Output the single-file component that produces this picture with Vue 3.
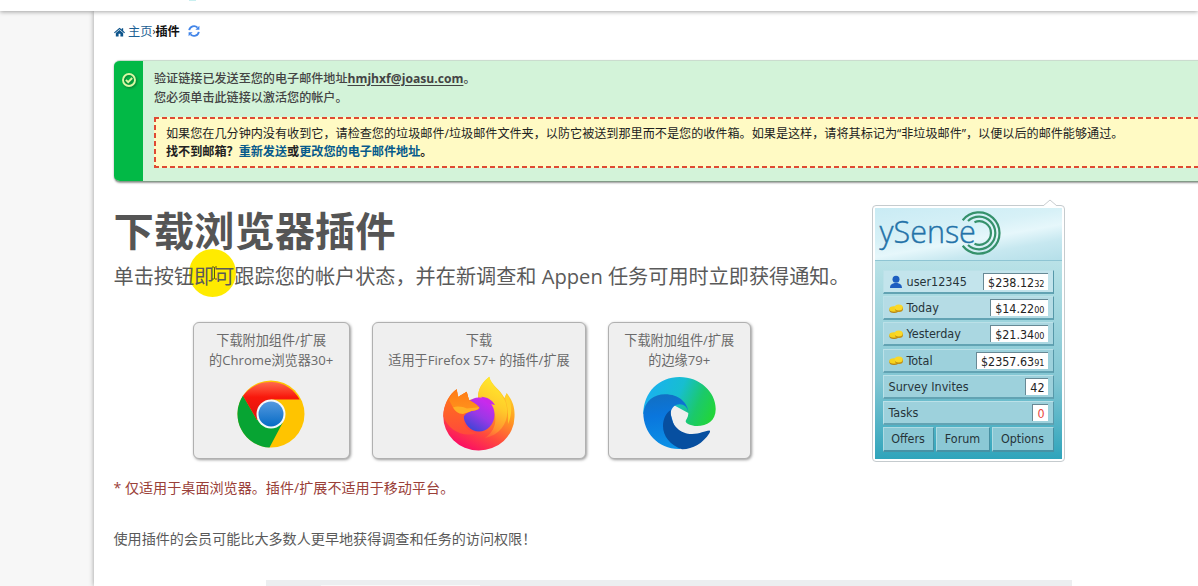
<script setup>
const balances = [
  { label: 'user12345', value: '$238.12', small: '32', icon: 'user' },
  { label: 'Today', value: '$14.22', small: '00', icon: 'coin' },
  { label: 'Yesterday', value: '$21.34', small: '00', icon: 'coin' },
  { label: 'Total', value: '$2357.63', small: '91', icon: 'coin' },
  { label: 'Survey Invites', value: '42' },
  { label: 'Tasks', value: '0', alert: true },
]
</script>

<template>
  <div class="page">
    <header class="topbar"><i class="speck"></i></header>
    <div class="body">
      <main class="content">
        <nav class="crumbs">
          <svg class="home" viewBox="0 0 12 10"><path d="M6 .4 0 5.500l.8.8L6 2l5.200 4.300.8-.8L10 3.700V1H8.500v1.400z" /><path d="M2 6v3.800h3V7h2v2.800h3V6L6 2.800z" /></svg>
          <a>主页</a><span class="sep">›</span><b>插件</b>
          <svg class="sync" viewBox="0 0 12 12"><path d="M1.200 5.200A4.900 4.900 0 0 1 9.500 2.600M10.800 6.800A4.900 4.900 0 0 1 2.500 9.400" fill="none" stroke="#4285e8" stroke-width="1.900" /><path d="M11.400.8v4h-4zM.6 11.200v-4h4z" fill="#4285e8" /></svg>
        </nav>

        <section class="alert">
          <div class="alert-side">
            <svg viewBox="0 0 16 16"><circle cx="8" cy="8" r="6" fill="none" stroke="#d9f8a4" stroke-width="1.900" /><path d="M4.900 7.900l2.300 2.300 4-4.200" fill="none" stroke="#d9f8a4" stroke-width="1.900" /></svg>
          </div>
          <div class="alert-main">
            <p>验证链接已发送至您的电子邮件地址<u>hmjhxf@joasu.com</u>。</p>
            <p>您必须单击此链接以激活您的帐户。</p>
            <div class="notice">
              <p>如果您在几分钟内没有收到它，请检查您的垃圾邮件/垃圾邮件文件夹，以防它被送到那里而不是您的收件箱。如果是这样，请将其标记为“非垃圾邮件”，以便以后的邮件能够通过。</p>
              <p class="strong">找不到邮箱？<a>重新发送</a>或<a>更改您的电子邮件地址</a>。</p>
            </div>
          </div>
        </section>

        <div class="columns">
          <div class="left">
            <h1>下载浏览器插件</h1>
            <p class="lead"><span class="pointer"></span><span class="lead-text">单击按钮即可跟踪您的帐户状态，并在新调查和 Appen 任务可用时立即获得通知。</span>
              <svg class="ibeam" viewBox="0 0 7 14"><path d="M1 1h2l.5.500L4 1h2M3.500 1.500v11M1 13h2l.5-.5.500.5h2" fill="none" stroke="#5a5310" stroke-width="1" /></svg>
            </p>
            <div class="buttons">
              <div class="card chrome">
                <span>下载附加组件/扩展</span><span>的Chrome浏览器30+</span>
                <svg viewBox="0 0 72 72">
                  <defs>
                    <linearGradient id="cr" x1="0" y1="0" x2="0" y2="1"><stop offset="0" stop-color="#ff6a4d" /><stop offset=".4" stop-color="#f8180c" /><stop offset="1" stop-color="#dc140e" /></linearGradient>
                    <linearGradient id="cb" x1="0" y1="0" x2="0" y2="1"><stop offset="0" stop-color="#5599df" /><stop offset="1" stop-color="#066bc5" /></linearGradient>
                  </defs>
                  <circle cx="36" cy="37" r="33.500" fill="#ffc400" />
                  <path d="M34.500 70.500 47.500 46 36 37 22 43 8 18.600A33.500 33.500 0 0 0 34.500 70.500" fill="#07a433" />
                  <path d="M8 19A33.500 33.500 0 0 1 64.700 22.500H36L22 43z" fill="url(#cr)" />
                  <circle cx="36" cy="37" r="14.500" fill="#f4f8fb" />
                  <circle cx="36" cy="37" r="12.500" fill="url(#cb)" />
                </svg>
              </div>
              <div class="card firefox">
                <span>下载</span><span>适用于Firefox 57+ 的插件/扩展</span>
                <svg viewBox="0 0 72 75">
                  <defs>
                    <linearGradient id="fo" x1=".75" y1=".1" x2=".3" y2="1"><stop offset="0" stop-color="#ffd52b" /><stop offset=".35" stop-color="#ff9a22" /><stop offset=".68" stop-color="#ff4a3d" /><stop offset="1" stop-color="#fa0868" /></linearGradient>
                    <linearGradient id="fy" x1=".6" y1="0" x2=".35" y2="1"><stop offset="0" stop-color="#ffed2c" /><stop offset=".45" stop-color="#ffcb2a" /><stop offset=".8" stop-color="#ff9330" /><stop offset="1" stop-color="#ff5a3c" /></linearGradient>
                    <linearGradient id="fp" x1=".8" y1=".1" x2=".3" y2="1"><stop offset="0" stop-color="#d028ee" /><stop offset=".5" stop-color="#9a38e6" /><stop offset="1" stop-color="#3b45d6" /></linearGradient>
                    <linearGradient id="fh" x1="0" y1="0" x2="0" y2="1"><stop offset="0" stop-color="#ff7a16" /><stop offset="1" stop-color="#ff951c" /></linearGradient>
                    <linearGradient id="fl" x1="0" y1="0" x2="0" y2="1"><stop offset="0" stop-color="#ff7a16" /><stop offset="1" stop-color="#ff4a3a" /></linearGradient>
                  </defs>
                  <path d="M35 22C35 11 41 5 46.300.7 48 9 57 13 61.500 22L63.700 17C70 25 72 32 71.500 41A35.600 34 0 0 1 .3 40C.3 30 5 20 13.700 13.300L15 21l8.700-5.300L26 24z" fill="url(#fo)" />
                  <path d="M35 21C35 11 41 5 46.300.7 48 10 58 14 62.500 26 68 42 60 58 42 62 54 54 55 40 48 29z" fill="url(#fy)" />
                  <path d="M63.700 17.500C70 27 69 39 65 48c1-14-2-22-3-27z" fill="#ffd12b" />
                  <ellipse cx="36" cy="38.500" rx="15.500" ry="17" fill="url(#fp)" />
                  <path d="M38 20.800C44 21 49 24 52 29l-7-1.500z" fill="#c92ae8" />
                  <path d="M.3 40C1 28 7 17 13.700 13.300L15 21l8.700-5.300L26 24.300c3 1 9 5 10.500 7.500C35 35 30 34 27 35.500 22 38 20 40 20.500 44 21 52 27 56 34 57 20 62 5 54 .3 40z" fill="url(#fl)" />
                  <path d="M6 24C9 18 11 15 13.700 13.300L15 21l8.700-5.300L26 24.300c3 1 9 5 10.500 7.500C35 35 30 34 27 35.500 23 37 18 38 10 31.500z" fill="url(#fh)" />
                  <path d="M10 31.500c5-2 10-.5 14 1l12-1.200C35 35 30 34 27 35.500L20 38c-5 0-8-3-10-6.500z" fill="#ffb025" />
                </svg>
              </div>
              <div class="card edge">
                <span>下载附加组件/扩展</span><span>的边缘79+</span>
                <svg viewBox="0 0 73 73">
                  <defs>
                    <linearGradient id="eg" x1="0" y1=".35" x2="1" y2=".65"><stop offset="0" stop-color="#1ab0f2" /><stop offset=".45" stop-color="#17bed0" /><stop offset=".75" stop-color="#1bc96b" /><stop offset="1" stop-color="#22d53a" /></linearGradient>
                    <linearGradient id="eb" x1=".2" y1="0" x2=".3" y2="1"><stop offset="0" stop-color="#126fc2" /><stop offset=".4" stop-color="#0a76dd" /><stop offset="1" stop-color="#0c91e6" /></linearGradient>
                  </defs>
                  <path d="M.3 37C.5 15 16 0 36.500 0S72.700 15 72.700 32C72.700 44 64 49 54 49 48 49 42.700 46.500 42.700 44.500S45.300 41 45.300 36L25 25z" fill="url(#eg)" />
                  <path d="M.3 36C2 24 11 17.300 22 17.300 36 17.300 45 26 45.300 35.700 44.500 30 41 27.300 36.700 27.300 31 27.300 27.700 32 27.700 37l10 34.900C16 73 .3 56 .3 36z" fill="url(#eb)" />
                  <path d="M27.700 33C27 49 38 57 49 57 57 57 61.500 54 66.500 53.600 67.500 54 67 55 66.500 56 60 66.500 49 72.500 39 72.200 27 68 20 59 20 49 20 42 23 36 27.700 33z" fill="#074fa0" />
                </svg>
              </div>
            </div>
            <p class="warn">* 仅适用于桌面浏览器。插件/扩展不适用于移动平台。</p>
            <p class="info">使用插件的会员可能比大多数人更早地获得调查和任务的访问权限！</p>
          </div>

          <aside class="widget">
            <svg class="caret" viewBox="0 0 14 7"><path d="M0 7 7 1l7 6" fill="#fff" stroke="#c8cccf" /></svg>
            <div class="logo">
              <svg viewBox="0 0 44 46" fill="none" stroke="#35916b" stroke-width="2.200">
                <path d="M3.700 10.300A20.600 20.600 0 1 1 3.700 35.700" />
                <path d="M9 11A16.300 16.300 0 1 1 9 35" />
                <path d="M15.500 12.300A11.700 11.700 0 1 1 15.500 33.700" />
              </svg>
              <span>ySense</span>
            </div>
            <div class="rows">
              <div v-for="row in balances" :key="row.label" class="row">
                <svg v-if="row.icon === 'user'" class="ico" viewBox="0 0 14 14"><circle cx="7" cy="4.200" r="3.500" fill="#1d5ec0" /><path d="M1 13c0-4 3-4.500 4.500-5h3C10 8.500 13 9 13 13z" fill="#1d5ec0" /></svg>
                <svg v-else-if="row.icon" class="ico" viewBox="0 0 14 14"><ellipse cx="5" cy="9" rx="4.700" ry="3" fill="#b68414" /><ellipse cx="5" cy="8" rx="4.700" ry="2.800" fill="#f7d31e" /><ellipse cx="10" cy="7.800" rx="4" ry="3.300" fill="#c29013" /><ellipse cx="9.700" cy="6.500" rx="4" ry="3" fill="#fbd927" /></svg>
                <span class="label">{{ row.label }}</span>
                <span class="value" :class="{ red: row.alert }">{{ row.value }}<small v-if="row.small">{{ row.small }}</small></span>
              </div>
              <div class="tabs"><span class="t1">Offers</span><span class="t2">Forum</span><span class="t3">Options</span></div>
            </div>
          </aside>
        </div>
        <div class="table-edge"><i></i></div>
      </main>
    </div>
  </div>
</template>

<style>
body { background: #fff; overflow: hidden; }
</style>

<style scoped>
* { box-sizing: border-box; }
p, h1 { margin: 0; }
.page { width: 1198px; height: 586px; overflow: hidden; display: flex; flex-direction: column; background: #f7f7f7; font-family: "Open Sans", "Noto Sans CJK SC", sans-serif; color: #555; white-space: nowrap; }
.topbar { flex: none; height: 11px; background: #fff; box-shadow: 0 1px 4px rgba(0,0,0,.35); position: relative; z-index: 2; }
.speck { position: absolute; left: 189px; top: 0; width: 7px; height: 1px; background: #c9eff0; }
.body { flex: 1; min-height: 0; padding-left: 94px; display: flex; }
.content { flex: 1; min-width: 0; background: #fff; box-shadow: 0 0 5px rgba(0,0,0,.38); padding-left: 19.500px; display: flex; flex-direction: column; }
.crumbs { height: 49px; flex: none; padding-bottom: 10px; display: flex; align-items: center; font-size: 12.200px; color: #111; }
.home { width: 11px; height: 10px; fill: #0d548b; margin-right: 3.500px; margin-top: 2px; }
.crumbs a { color: #1a5f94; }
.sep { width: 3px; font-size: 10px; overflow: visible; }
.sync { width: 12px; height: 12px; margin-left: 8px; }
.alert { flex: none; width: 1120px; height: 122px; display: flex; background: #d3f3d9; border-radius: 6px; border-top: 1px solid #cbdccf; border-bottom: 1px solid #849a88; box-shadow: 0 1px 2px rgba(0,0,0,.4); overflow: hidden; }
.alert-side { width: 29.500px; background: #02b946; padding: 11px 0 0 7px; }
.alert-side svg { width: 16px; height: 16px; display: block; filter: drop-shadow(1px 1px 1px #087530); }
.alert-main { padding: 9px 0 0 11px; font-size: 12.100px; line-height: 18.500px; color: #444; font-weight: 500; }
.alert-main u { font-weight: 700; font-size: 12.150px; text-underline-offset: 2px; }
.notice {
  --h: repeating-linear-gradient(90deg, #df4a32 0 5px, transparent 5px 8px);
  --v: repeating-linear-gradient(#df4a32 0 5px, transparent 5px 8px);
  margin-top: 10px; width: 1070px; height: 51px; padding: 7.500px 0 0 12px; color: #222; font-size: 12.120px; font-weight: 400;
  background: var(--h) 0 0 / 100% 2px no-repeat, var(--h) 0 100% / 100% 2px no-repeat, var(--v) 0 0 / 2px 100% no-repeat, #fffac4;
}
.strong { font-weight: 700; }
.strong a { color: #075b8c; }
.columns { display: flex; flex: none; height: 398px; }
.left { width: 758px; }
h1 { margin-top: 20px; font-size: 40.300px; line-height: 58px; color: #555; font-weight: 700; }
.lead { position: relative; height: 30px; line-height: 30px; margin-top: 1px; font-size: 20.150px; color: #5a5a5a; }
.pointer { position: absolute; left: 75.500px; top: -12px; width: 47px; height: 48px; border-radius: 50%; background: #ffeb00; }
.lead-text { position: relative; }
.ibeam { position: absolute; left: 97px; top: 5px; width: 7px; height: 14px; }
.buttons { display: flex; gap: 22px; margin: 30.500px 0 0 79px; }
.card { height: 137px; border: 1.500px solid #b0b0b0; border-radius: 6px; background: #efefef; box-shadow: 1px 1px 3px rgba(0,0,0,.4); display: flex; flex-direction: column; align-items: center; padding-top: 7px; font-size: 13.150px; line-height: 20px; color: #6a6a6a; }
.card svg { width: 72px; height: 72px; margin-top: 7px; flex: none; }
.chrome { width: 157.500px; }
.firefox { width: 214px; }
.firefox svg { height: 75px; margin-top: 6px; }
.edge { width: 142.500px; }
.edge svg { width: 73px; height: 73px; }
.warn { margin-top: 18.500px; line-height: 22px; font-size: 14.100px; color: #9a4038; }
.info { margin-top: 29px; line-height: 22px; font-size: 14.100px; color: #5a5a5a; }
.widget { position: relative; margin-top: 23px; width: 193px; height: 257px; border: 1px solid #c5cbce; border-radius: 4px; padding: 2px; background: #fff; font-family: "DejaVu Sans Condensed", "DejaVu Sans", sans-serif; color: #26343a; }
.caret { position: absolute; left: 170px; top: -7px; width: 14px; height: 7px; }
.logo { height: 53px; display: flex; position: relative; background: linear-gradient(170deg, #c9ebf4 0%, #d7f1f7 40%, #e6f7fb 58%, #c7e8f0 76%, #b5dfe9 100%); border-bottom: 1px solid #8ec5d3; }
.logo span { position: relative; font-family: "Open Sans", sans-serif; font-weight: 300; font-size: 30.500px; line-height: 47px; padding-left: 5px; color: #2372a8; -webkit-text-stroke: .4px #2372a8; }
.logo svg { position: absolute; left: 84.500px; top: 2px; width: 44px; height: 46px; }
.rows { height: 198px; padding: 9px 8px 0 8px; background: linear-gradient(#b9e2e7, #82c6d3 60%, #2fa4bb); display: flex; flex-direction: column; gap: 2.200px; }
.row { height: 24px; flex: none; display: flex; align-items: center; padding: 0 4.500px 0 5px; font-size: 12.500px; background: #9dd1dc; border: 1px solid #bbe1e8; border-right-color: #5798a9; border-bottom: 2px solid #62a3b3; }
.row:nth-child(1) { background: #c3e4ec; }
.row:nth-child(2) { background: #b5dce5; }
.row:nth-child(3) { background: #aad7e1; }
.ico { width: 14px; height: 14px; margin-right: 4px; }
.label { flex: 1; }
.value { height: 17px; line-height: 17px; padding: 0 3.500px 0 4px; background: #fff; border-left: 1px solid #678995; border-top: 1px solid #678995; color: #222; font-size: 12.400px; }
.value small { font-size: 9px; }
.red { color: #e8473f; }
.tabs { display: flex; gap: 2px; height: 25px; font-size: 12.400px; line-height: 22px; text-align: center; }
.tabs span { background: #8bc8d5; border: 1px solid #aedbe3; border-right-color: #4790a2; border-bottom: 2px solid #4792a5; }
.t1 { width: 51px; }
.t2 { width: 54px; }
.t3 { flex: 1; }
.table-edge { flex: none; width: 806px; height: 8px; margin-left: 152.500px; background: #eceef0; padding: 5px 0 0 55px; }
.table-edge i { display: block; width: 159px; height: 3px; background: #f8f8f8; }
</style>
